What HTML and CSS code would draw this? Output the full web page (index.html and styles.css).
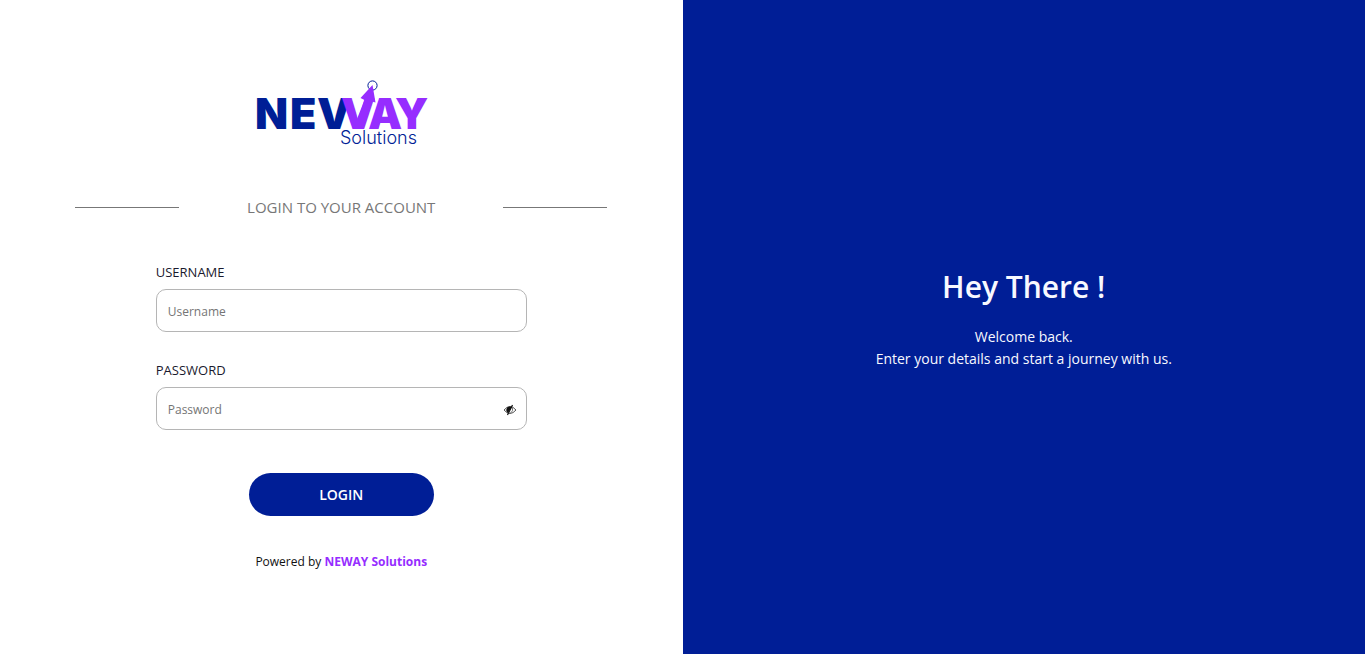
FILE: index.html
```html
<!DOCTYPE html>
<html lang="en">
<head>
<meta charset="utf-8">
<meta name="viewport" content="width=device-width, initial-scale=1">
<title>NEWAY Solutions - Login</title>
<link rel="stylesheet" href="styles.css">
</head>
<body>
<main class="page">
  <section class="login">
    <svg class="logo" viewBox="0 0 172 66" role="img" aria-label="NEWAY Solutions">
      <circle class="logo-ring" cx="117.500" cy="5.500" r="4.600"/>
      <text class="logo-word logo-blue" x="0 35 62" y="49">NEV</text>
      <text class="logo-word logo-purple" x="86 113 140" y="49">VAY</text>
      <path class="logo-purple" d="M117.500 5 L105.500 18 L109.500 20 L98 49 H107 L117 21.500 L120.500 22.500 Z"/>
      <text class="logo-sub logo-blue" x="85" y="64">Solutions</text>
    </svg>
    <h2 class="title"><span>LOGIN TO YOUR ACCOUNT</span></h2>
    <form class="form">
      <label class="label" for="username">USERNAME</label>
      <input class="input" id="username" type="text" placeholder="Username">
      <label class="label" for="password">PASSWORD</label>
      <div class="field">
        <input class="input" id="password" type="password" placeholder="Password">
        <button class="toggle" type="button" aria-label="Show password">
          <svg viewBox="0 0 14 12" width="14" height="12">
            <path d="M1 6 Q7 -1 13 6 Q7 13 1 6 Z" fill="none" stroke="#555" stroke-width="1"/>
            <path d="M7 2.500 A3.500 3.500 0 0 0 5 9 L9 3 Z" fill="#111"/>
            <path d="M9.500 1 L4.500 11" stroke="#111" stroke-width="1.200"/>
            <path d="M9.500 4 Q10.500 7 7.500 9" fill="none" stroke="#777" stroke-width="1"/>
          </svg>
        </button>
      </div>
      <button class="submit" type="submit">LOGIN</button>
    </form>
    <p class="footer">Powered by <a href="#">NEWAY Solutions</a></p>
  </section>
  <section class="welcome">
    <h1>Hey There !</h1>
    <p>Welcome back.<br>Enter your details and start a journey with us.</p>
  </section>
</main>
</body>
</html>
```
FILE: styles.css
```css
* { box-sizing: border-box; }
body {
  margin: 0;
  background: #fff;
  color: #212529;
  font-family: "Segoe UI", "Open Sans", "Noto Sans", sans-serif;
  font-size: 12px;
}
.page {
  display: grid;
  grid-template-columns: 1fr 1fr;
  min-height: 100vh;
}
.login {
  display: flex;
  flex-direction: column;
  align-items: center;
  justify-content: center;
  padding: 0 11%;
}
.logo { width: 172px; height: 66px; overflow: visible; }
.logo-word { font: 900 43px Inter, sans-serif; }
.logo-sub { font: 300 18px Inter, sans-serif; }
.logo-blue { fill: #001e96; }
.logo-purple { fill: #962dff; }
.logo-ring { fill: none; stroke: #001e96; stroke-width: 1; }
.title {
  display: flex;
  align-items: center;
  justify-content: space-between;
  width: 100%;
  margin: 49px 0 43px;
  color: #777;
  font-size: 15px;
  font-weight: 400;
  line-height: 24px;
}
.title::before,
.title::after {
  content: "";
  width: 104px;
  height: 1px;
  background: #777;
}
.form {
  display: flex;
  flex-direction: column;
  width: 100%;
  max-width: 371px;
}
.label {
  margin-bottom: 7px;
  color: #1a1a2e;
  font-size: 13px;
  line-height: 20px;
}
.input {
  width: 100%;
  height: 43px;
  padding: 1px 12px 0 11px;
  border: 1px solid #b5b5b5;
  border-radius: 10px;
  background: #fff;
  color: inherit;
  font: inherit;
}
.input::placeholder { color: #757575; opacity: 1; }
.form > .input { margin-bottom: 28px; }
.field { position: relative; }
.field .input { display: block; padding-right: 36px; }
.toggle {
  position: absolute;
  right: 9px;
  top: 50%;
  display: flex;
  padding: 2px 1px 0;
  border: 0;
  background: none;
  transform: translateY(-50%);
  cursor: pointer;
}
.submit {
  align-self: center;
  width: 50%;
  height: 43px;
  margin-top: 43px;
  border: 0;
  border-radius: 22px;
  background: #001e96;
  color: #fff;
  font-family: inherit;
  font-size: 14px;
  font-weight: 600;
  cursor: pointer;
}
.footer {
  margin: 34px 0 0;
  color: #111;
  font-size: 12px;
  line-height: 24px;
}
.footer a {
  color: #962dff;
  font-weight: 700;
  text-decoration: none;
}
.welcome {
  display: flex;
  flex-direction: column;
  align-items: center;
  justify-content: center;
  padding: 0 24px 21px;
  background: #001e96;
  color: #f8f9ff;
  text-align: center;
}
.welcome h1 {
  margin: 0 0 15px;
  font-size: 30px;
  font-weight: 600;
  line-height: 48px;
}
.welcome p {
  margin: 0;
  font-size: 14px;
  line-height: 22px;
}
```
